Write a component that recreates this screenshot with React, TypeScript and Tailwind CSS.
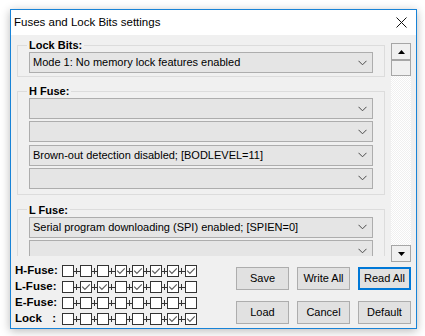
import React from 'react';

const font = { fontFamily: '"Liberation Sans", Arial, sans-serif' };

const Chevron = () => (
  <svg width="9" height="6" viewBox="0 0 9 6" className="shrink-0">
    <path d="M0.5 0.8 L4.5 4.8 L8.5 0.8" fill="none" stroke="#4a4a4a" strokeWidth="1" />
  </svg>
);

const Combo = ({ text = '' }: { text?: string }) => (
  <div className="flex h-[21px] w-[344px] items-center justify-between border border-[#adadad] bg-[#e5e5e5] pl-[3px] pr-[5px] text-[11px] leading-none text-black">
    <span className="whitespace-nowrap">{text}</span>
    <Chevron />
  </div>
);

const Group = ({ label, className, children }: { label: string; className: string; children: React.ReactNode }) => (
  <fieldset className={`w-[368px] border border-[#dcdcdc] pl-[11px] ${className}`}>
    <legend className="-ml-[2px] px-[2px] text-[11px] font-bold leading-[14px] text-black">{label}</legend>
    <div className="flex flex-col gap-[2.33px]">{children}</div>
  </fieldset>
);

const Check = ({ on }: { on: boolean }) => (
  <div className="h-[12px] w-[12px] shrink-0 border border-[#333] bg-white">
    {on && (
      <svg width="10" height="10" viewBox="0 0 10 10">
        <path d="M1.2 4.6 L3.9 7.3 L8.8 2.4" fill="none" stroke="#5c5c5c" strokeWidth="1.2" />
      </svg>
    )}
  </div>
);

const Link = () => (
  <div className="flex h-[12px] w-[5.5px] shrink-0 items-center">
    <div className="h-px w-[2px] bg-[#333]" />
    <div className="h-[6px] w-px bg-[#333]" />
    <div className="h-px flex-1 bg-[#333]" />
  </div>
);

const rows: { label: string; bits: number[] }[] = [
  { label: 'H-Fuse:', bits: [0, 0, 0, 1, 1, 1, 1, 1] },
  { label: 'L-Fuse:', bits: [0, 1, 1, 0, 1, 0, 1, 0] },
  { label: 'E-Fuse:', bits: [0, 0, 0, 0, 0, 0, 0, 0] },
  { label: 'Lock', bits: [0, 0, 0, 0, 0, 0, 1, 1] },
];

const Btn = ({ label, focused }: { label: string; focused?: boolean }) => (
  <button
    className={`flex h-[23px] w-[53px] items-center justify-center bg-[#e1e1e1] text-[11px] leading-none text-black ${
      focused ? 'border-2 border-[#0078d7]' : 'border border-[#adadad]'
    }`}
  >
    {label}
  </button>
);

const SbBtn = ({ up }: { up?: boolean }) => (
  <div className="flex h-[17px] w-[20px] items-center justify-center border border-[#a6a6a6] bg-[#f0f0f0]">
    <svg width="7" height="4" viewBox="0 0 7 4">
      <path d={up ? 'M0 4 L3.5 0 L7 4 Z' : 'M0 0 L3.5 4 L7 0 Z'} fill="#000" />
    </svg>
  </div>
);

export default function App() {
  return (
    <div className="h-[336px] w-[425px] overflow-hidden bg-white pl-[10px] pt-[9px]" style={font}>
      <div className="flex h-[320px] w-[407px] flex-col border border-[#1883d7] bg-[#f0f0f0] shadow-[0_2px_9px_rgba(0,0,0,0.28)]">
        {/* title bar */}
        <div className="flex h-[25px] shrink-0 items-center justify-between bg-white pl-[3px] pr-[9px]">
          <span className="text-[11.5px] text-black">Fuses and Lock Bits settings</span>
          <svg width="11" height="11" viewBox="0 0 11 11">
            <path d="M0.5 0.5 L10.5 10.5 M10.5 0.5 L0.5 10.5" stroke="#111" strokeWidth="1" />
          </svg>
        </div>

        {/* scroll area */}
        <div className="flex h-[227px] shrink-0">
          <div className="h-[221px] w-[379px] overflow-hidden pl-[6px] pt-[3px]">
            <Group label="Lock Bits:" className="pb-[3px]">
              <Combo text="Mode 1: No memory lock features enabled" />
            </Group>
            <Group label="H Fuse:" className="mt-[7px] pb-[5px]">
              <Combo />
              <Combo />
              <Combo text="Brown-out detection disabled; [BODLEVEL=11]" />
              <Combo />
            </Group>
            <Group label="L Fuse:" className="mt-[8px] pb-[5px]">
              <Combo text="Serial program downloading (SPI) enabled; [SPIEN=0]" />
              <Combo />
              <Combo />
            </Group>
          </div>
          <div className="ml-px mt-[8px] flex h-[219px] w-[20px] flex-col">
            <SbBtn up />
            <div className="-mt-px h-[17px] border border-t-2 border-[#a6a6a6] bg-[#f0f0f0]" />
            <div className="flex-1 bg-[repeating-conic-gradient(#f0f0f0_0_25%,#ffffff_0_50%)] bg-[length:2px_2px]" />
            <SbBtn />
          </div>
        </div>

        {/* bottom */}
        <div className="flex pl-[4px] pr-[5px] pt-[3px]">
          <div className="flex flex-col gap-[4px]">
            {rows.map((r) => (
              <div key={r.label} className="flex h-[12px] items-center">
                <div className="flex w-[47px] shrink-0 whitespace-nowrap pr-[4px] text-[11.5px] font-bold leading-none text-black">
                  {r.label === 'Lock' ? (
                    <span className="flex w-full justify-between pr-[2px]">
                      <span>Lock</span>
                      <span>:</span>
                    </span>
                  ) : (
                    <span>{r.label}</span>
                  )}
                </div>
                {r.bits.map((b, i) => (
                  <React.Fragment key={i}>
                    {i > 0 && <Link />}
                    <Check on={b === 1} />
                  </React.Fragment>
                ))}
              </div>
            ))}
          </div>
          <div className="ml-auto mt-[2px] grid grid-cols-3 gap-x-[8px] gap-y-[10px]">
            <Btn label="Save" />
            <Btn label="Write All" />
            <Btn label="Read All" focused />
            <Btn label="Load" />
            <Btn label="Cancel" />
            <Btn label="Default" />
          </div>
        </div>
      </div>
    </div>
  );
}
